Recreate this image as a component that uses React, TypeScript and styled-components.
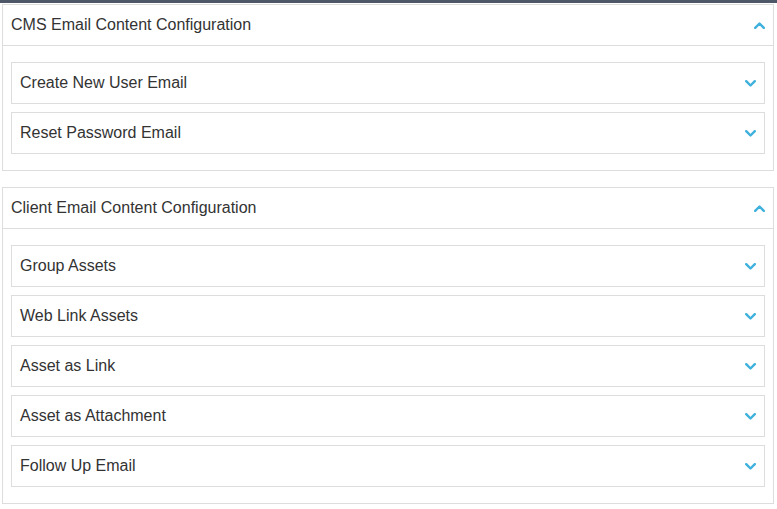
import React from "react";
import styled, { createGlobalStyle } from "styled-components";

const Global = createGlobalStyle`
  html, body { margin: 0; padding: 0; background: #fff; }
  body { font-family: "Liberation Sans", Arial, sans-serif; color: #333; }
`;

const TopBar = styled.div`
  height: 3px;
  background: #4f5869;
`;

const Page = styled.div`
  padding: 1px 3px 0 2px;
  display: flex;
  flex-direction: column;
  gap: 16px;
`;

const Panel = styled.section`
  border: 1px solid #ddd;
  background: #fff;
`;

const PanelHeader = styled.div`
  height: 40px;
  border-bottom: 1px solid #ddd;
  display: flex;
  align-items: center;
  justify-content: space-between;
  padding: 0 8px 0 8px;
  font-size: 16px;
  color: #333;
`;

const PanelBody = styled.div`
  padding: 16px 8px;
  display: flex;
  flex-direction: column;
  gap: 8px;
`;

const Item = styled.div`
  height: 40px;
  border: 1px solid #ddd;
  display: flex;
  align-items: center;
  justify-content: space-between;
  padding: 0 8px;
  font-size: 16px;
  color: #333;
`;

const Chevron = ({ up }: { up?: boolean }) => (
  <svg width="11" height="7" viewBox="0 0 11 7" style={{ display: "block" }}>
    <polyline
      points={up ? "1.2,5.8 5.5,1.5 9.8,5.8" : "1.2,1.2 5.5,5.5 9.8,1.2"}
      fill="none"
      stroke="#3eb1dc"
      strokeWidth="2.4"
      strokeLinecap="round"
      strokeLinejoin="round"
    />
  </svg>
);

const ChevronBox = styled.span<{ $inset: number }>`
  display: flex;
  margin-right: ${(p) => p.$inset}px;
`;

const sections = [
  {
    title: "CMS Email Content Configuration",
    items: ["Create New User Email", "Reset Password Email"],
  },
  {
    title: "Client Email Content Configuration",
    items: [
      "Group Assets",
      "Web Link Assets",
      "Asset as Link",
      "Asset as Attachment",
      "Follow Up Email",
    ],
  },
];

export default function App() {
  return (
    <>
      <Global />
      <TopBar />
      <Page>
        {sections.map((s) => (
          <Panel key={s.title}>
            <PanelHeader>
              <span>{s.title}</span>
              <ChevronBox $inset={0}>
                <Chevron up />
              </ChevronBox>
            </PanelHeader>
            <PanelBody>
              {s.items.map((it) => (
                <Item key={it}>
                  <span>{it}</span>
                  <ChevronBox $inset={0}>
                    <Chevron />
                  </ChevronBox>
                </Item>
              ))}
            </PanelBody>
          </Panel>
        ))}
      </Page>
    </>
  );
}
